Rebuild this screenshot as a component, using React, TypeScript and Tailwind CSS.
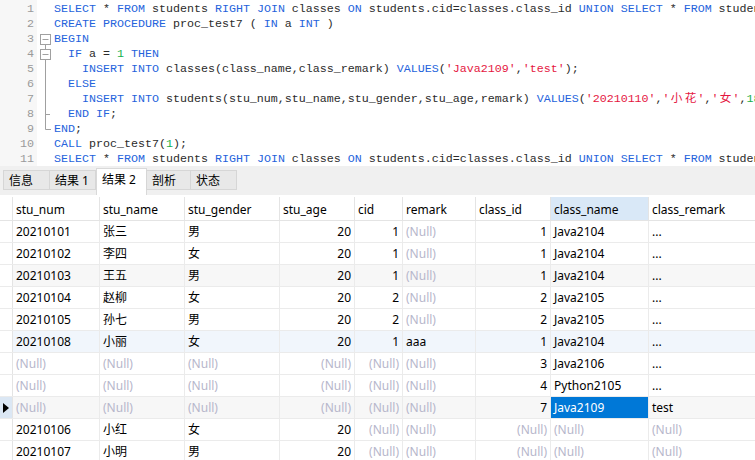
import React from "react";

type Tok = [string, string];
const K = "k", P = "p", S = "s", N = "n";

const lines: Tok[][] = [
  [[K, "SELECT"], [P, " * "], [K, "FROM"], [P, " students "], [K, "RIGHT JOIN"], [P, " classes "], [K, "ON"], [P, " students.cid=classes.class_id "], [K, "UNION SELECT"], [P, " * "], [K, "FROM"], [P, " students "], [K, "LEFT JOIN"], [P, " classes "], [K, "ON"], [P, " students.cid=classes.class_id;"]],
  [[K, "CREATE PROCEDURE"], [P, " proc_test7 ( "], [K, "IN"], [P, " a "], [K, "INT"], [P, " )"]],
  [[K, "BEGIN"]],
  [[P, "  "], [K, "IF"], [P, " a = "], [N, "1"], [P, " "], [K, "THEN"]],
  [[P, "    "], [K, "INSERT INTO"], [P, " classes(class_name,class_remark) "], [K, "VALUES"], [P, "("], [S, "'Java2109'"], [P, ","], [S, "'test'"], [P, ");"]],
  [[P, "  "], [K, "ELSE"]],
  [[P, "    "], [K, "INSERT INTO"], [P, " students(stu_num,stu_name,stu_gender,stu_age,remark) "], [K, "VALUES"], [P, "("], [S, "'20210110'"], [P, ","], [S, "'小花'"], [P, ","], [S, "'女'"], [P, ","], [N, "18"], [P, ","], [S, "'xx'"], [P, ");"]],
  [[P, "  "], [K, "END IF"], [P, ";"]],
  [[K, "END"], [P, ";"]],
  [[K, "CALL"], [P, " proc_test7("], [N, "1"], [P, ");"]],
  [[K, "SELECT"], [P, " * "], [K, "FROM"], [P, " students "], [K, "RIGHT JOIN"], [P, " classes "], [K, "ON"], [P, " students.cid=classes.class_id "], [K, "UNION SELECT"], [P, " * "], [K, "FROM"], [P, " students "], [K, "LEFT JOIN"], [P, " classes "], [K, "ON"], [P, " students.cid=classes.class_id;"]],
];

const colorOf: Record<string, string> = {
  k: "text-[#2563dc]",
  p: "text-[#2b2b2b]",
  s: "text-[#e5173f]",
  n: "text-[#14b04c]",
};

function renderText(text: string) {
  const parts: React.ReactNode[] = [];
  let buf = "";
  let i = 0;
  for (const ch of Array.from(text)) {
    if (/[\u4e00-\u9fff]/.test(ch)) {
      if (buf) parts.push(buf);
      buf = "";
      parts.push(
        <span key={i++} className="inline-block w-[14px] text-center">
          {ch}
        </span>
      );
    } else buf += ch;
  }
  if (buf) parts.push(buf);
  return parts;
}

const cols = [
  { name: "stu_num", w: "w-[87px]", right: false },
  { name: "stu_name", w: "w-[85px]", right: false },
  { name: "stu_gender", w: "w-[95px]", right: false },
  { name: "stu_age", w: "w-[75px]", right: true },
  { name: "cid", w: "w-[48px]", right: true },
  { name: "remark", w: "w-[73px]", right: false },
  { name: "class_id", w: "w-[75px]", right: true },
  { name: "class_name", w: "w-[98px]", right: false },
  { name: "class_remark", w: "w-[150px]", right: false },
];

const NL = null;
const rows: (string | null)[][] = [
  ["20210101", "张三", "男", "20", "1", NL, "1", "Java2104", "..."],
  ["20210102", "李四", "女", "20", "1", NL, "1", "Java2104", "..."],
  ["20210103", "王五", "男", "20", "1", NL, "1", "Java2104", "..."],
  ["20210104", "赵柳", "女", "20", "2", NL, "2", "Java2105", "..."],
  ["20210105", "孙七", "男", "20", "2", NL, "2", "Java2105", "..."],
  ["20210108", "小丽", "女", "20", "1", "aaa", "1", "Java2104", "..."],
  [NL, NL, NL, NL, NL, NL, "3", "Java2106", "..."],
  [NL, NL, NL, NL, NL, NL, "4", "Python2105", "..."],
  [NL, NL, NL, NL, NL, NL, "7", "Java2109", "test"],
  ["20210106", "小红", "女", "20", NL, NL, NL, NL, NL],
  ["20210107", "小明", "男", "20", NL, NL, NL, NL, NL],
];

const rowBg = (i: number) =>
  i === 2 || i === 8 ? "bg-[#f7f7f7]" : i === 5 ? "bg-[#f1f6fc]" : "bg-white";

export default function App() {
  const uiFont = { fontFamily: '"Noto Sans", "Noto Sans CJK SC", sans-serif' };
  return (
    <div className="w-[755px] h-[460px] overflow-hidden bg-white flex flex-col text-[12px] text-black" style={uiFont}>
      {/* Editor */}
      <div
        className="h-[166px] flex shrink-0 overflow-hidden relative text-[11.67px] leading-[15px]"
        style={{ fontFamily: '"Liberation Mono", "Noto Sans CJK SC", monospace' }}
      >
        <div className="w-[37px] shrink-0 bg-[#f7f7f7] pt-[2px] pr-[3px] text-right text-[#9a9a9a]">
          {lines.map((_, i) => (
            <div key={i} className="h-[15px]">{i + 1}</div>
          ))}
        </div>
        <div className="w-[17px] shrink-0 relative">
          <svg width="17" height="166" className="absolute left-0 top-0" stroke="#a0a0a0" fill="none" strokeWidth="1">
            <rect x="3.5" y="34.5" width="10" height="10" fill="#fff" />
            <line x1="5.5" y1="39.5" x2="11.5" y2="39.5" />
            <line x1="8.5" y1="44.5" x2="8.5" y2="49.5" />
            <rect x="3.5" y="49.5" width="10" height="10" fill="#fff" />
            <line x1="5.5" y1="54.5" x2="11.5" y2="54.5" />
            <line x1="8.5" y1="59.5" x2="8.5" y2="129.5" />
            <line x1="8.5" y1="114.5" x2="13" y2="114.5" />
            <line x1="8.5" y1="129.5" x2="14" y2="129.5" />
          </svg>
        </div>
        <div className="flex-1 pt-[2px] whitespace-pre overflow-hidden">
          {lines.map((l, i) => (
            <div key={i} className="h-[15px]">
              {l.map((t, j) => (
                <span key={j} className={colorOf[t[0]]}>
                  {renderText(t[1])}
                </span>
              ))}
            </div>
          ))}
        </div>
      </div>

      {/* Tabs */}
      <div className="h-[29px] shrink-0 bg-[#f0f0f0] flex items-start pl-[3px]">
        {[
          { t: "信息", w: "w-[47px]" },
          { t: "结果 1", w: "w-[47px]" },
          { t: "结果 2", w: "w-[51px]", active: true },
          { t: "剖析", w: "w-[45px]" },
          { t: "状态", w: "w-[47px]" },
        ].map((tab, i) =>
          tab.active ? (
            <div key={i} className={`${tab.w} h-[27px] mt-[2px] bg-white border-x border-t border-[#d9d9d9] pl-[5px] pt-[3px] leading-[16px]`}>
              {tab.t}
            </div>
          ) : (
            <div key={i} className={`${tab.w} h-[20px] mt-[4px] bg-[#e8e8e8] border border-[#d6d6d6] -ml-px first:ml-0 pl-[5px] leading-[19px]`}>
              {tab.t}
            </div>
          )
        )}
      </div>

      {/* Grid */}
      <div className="flex-1 bg-white pt-[2px] overflow-hidden">
        <div className="flex h-[24px] border-b border-[#e4e4e4] w-max">
          <div className="w-[13px] shrink-0 border-r border-[#e4e4e4]" />
          {cols.map((c) => (
            <div
              key={c.name}
              className={`${c.w} shrink-0 border-r border-[#e4e4e4] px-[3px] pt-[1px] leading-[24px] ${c.name === "class_name" ? "bg-[#d9e8f7]" : ""}`}
            >
              {c.name}
            </div>
          ))}
        </div>
        {rows.map((r, ri) => (
          <div key={ri} className={`flex h-[22px] border-b border-[#ebebeb] w-max ${rowBg(ri)}`}>
            <div className={`w-[13px] shrink-0 border-r border-[#e4e4e4] flex items-center ${ri === 8 ? "bg-[#dbe7f4]" : "bg-white"}`}>
              {ri === 8 && (
                <svg width="9" height="10" className="ml-[3px]">
                  <polygon points="0,0 6,5 0,10" fill="#000" />
                </svg>
              )}
            </div>
            {cols.map((c, ci) => {
              const v = r[ci];
              const sel = ri === 8 && ci === 7;
              return (
                <div
                  key={ci}
                  className={`${c.w} shrink-0 border-r border-[#ebebeb] px-[3px] leading-[22px] whitespace-nowrap overflow-hidden ${c.right ? "text-right" : ""} ${sel ? "bg-[#0078d7] text-white" : ""} ${v === null ? "text-[#b6b6cb]" : ""}`}
                >
                  {v === null ? "(Null)" : v}
                </div>
              );
            })}
          </div>
        ))}
      </div>
    </div>
  );
}
